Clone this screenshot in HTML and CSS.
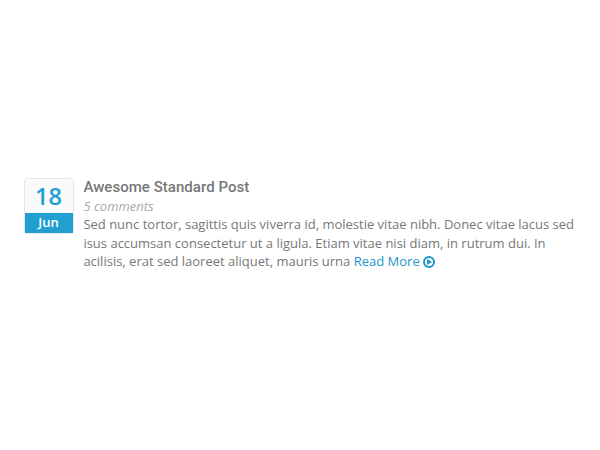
FILE: index.html
```html
<!DOCTYPE html>
<html lang="en">
<head>
<meta charset="utf-8">
<title>Awesome Standard Post</title>
<link rel="stylesheet" href="styles.css">
</head>
<body>
<article class="post">
  <div class="date"><span class="day">18</span><span class="month">Jun</span></div>
  <div class="content">
    <h4 class="title">Awesome Standard Post</h4>
    <div class="comments">5 comments</div>
    <p class="excerpt">Sed nunc tortor, sagittis quis viverra id, molestie vitae nibh. Donec vitae lacus sed<br>isus accumsan consectetur ut a ligula. Etiam vitae nisi diam, in rutrum dui. In<br>acilisis, erat sed laoreet aliquet, mauris urna <a class="more" href="#">Read More <svg class="icon" viewBox="0 0 12 12"><circle cx="6" cy="6" r="5" fill="none" stroke="currentColor" stroke-width="2"/><path d="M4 3L9.1 6L4 9Z" fill="currentColor"/></svg></a></p>
  </div>
</article>
</body>
</html>
```

FILE: styles.css
```css
body {
  margin: 0;
  background: #fff;
  font-family: "Open Sans", sans-serif;
  font-size: 13px;
  color: #777;
}
.post {
  display: flex;
  gap: 9.4px;
  padding: 178px 0 0 24px;
}
.date {
  box-sizing: border-box;
  width: 50px;
  height: 56px;
  border: 1px solid #e6e6e6;
  border-radius: 3px;
  text-align: center;
  font-weight: 600;
  background: #fafafa;
}
.day {
  display: block;
  height: 34px;
  padding-right: 1px;
  line-height: 34px;
  font-size: 23.5px;
  color: #219fd1;
}
.month {
  display: block;
  height: 20px;
  padding-right: 1px;
  line-height: 18px;
  color: #fff;
  background: #219fd1;
}
.content {
  white-space: nowrap;
}
.title {
  margin: 0;
  height: 19px;
  line-height: 18px;
  font-family: Roboto, sans-serif;
  font-size: 15px;
  font-weight: 500;
  letter-spacing: 0.04px;
}
.comments {
  height: 18px;
  line-height: 19px;
  font-style: italic;
  color: #aaa;
}
.excerpt {
  margin: 0;
  line-height: 18.57px;
}
.more {
  color: #1e95c8;
  text-decoration: none;
}
.icon {
  width: 12px;
  height: 12px;
  vertical-align: -1.5px;
}
```
